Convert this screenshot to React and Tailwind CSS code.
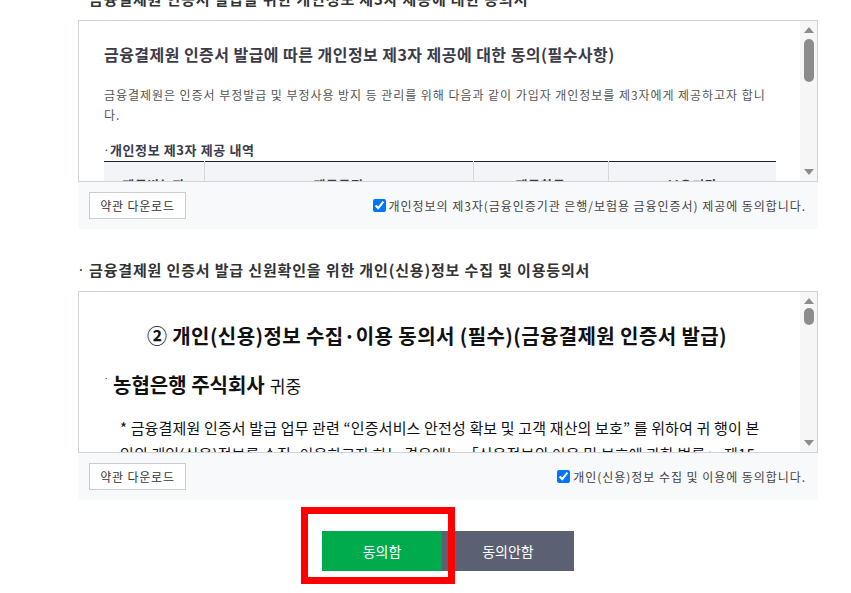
import React from 'react';

const FONT = { fontFamily: '"Noto Sans CJK KR", "Noto Sans", sans-serif' };

// fake scrollbar drawn in the right column of each box
const ScrollBar = ({ thumbTop, thumbHeight }) => (
  <div className="w-[17px] shrink-0 bg-[#f6f6f6] flex flex-col items-center py-[6px]">
    <div className="w-0 h-0 border-l-[5px] border-r-[5px] border-b-[6px] border-l-transparent border-r-transparent border-b-[#8c8c8c]" />
    <div
      className="w-[10px] rounded-full bg-[#8c8c8c]"
      style={{ marginTop: thumbTop, height: thumbHeight }}
    />
    <div className="flex-1" />
    <div className="w-0 h-0 border-l-[5px] border-r-[5px] border-t-[6px] border-l-transparent border-r-transparent border-t-[#8c8c8c]" />
  </div>
);

const BoxFooter = ({ label }) => (
  <div className="h-[47px] bg-[#f8f9fa] flex items-center justify-between pl-[11px] pr-[12px]">
    <button className="h-[27px] w-[97px] bg-white border border-[#cccccc] text-[12px] tracking-[0.8px] text-[#333]">
      약관 다운로드
    </button>
    <label className="flex items-center gap-[3px] text-[12px] tracking-[0.95px] text-[#444]">
      <input type="checkbox" defaultChecked className="w-[13px] h-[13px] accent-[#0075ff]" />
      {label}
    </label>
  </div>
);

const SectionTitle = ({ children }) => (
  <div className="leading-[20px] mb-[11px] text-[15px] tracking-[0.85px] font-bold text-[#333] flex items-center">
    <span className="w-[11px] text-[10px]">·</span>
    {children}
  </div>
);

const ThirdPartyContent = () => (
  <div className="pl-[25px] pr-[24px] pt-[23px] text-[#3b3b48]">
    <div className="text-[16px] font-bold leading-[20px] tracking-[0.45px]">
      금융결제원 인증서 발급에 따른 개인정보 제3자 제공에 대한 동의(필수사항)
    </div>
    <p className="mt-[21px] text-[12px] leading-[20px] tracking-[0.95px] text-[#555]">
      금융결제원은 인증서 부정발급 및 부정사용 방지 등 관리를 위해 다음과 같이 가입자 개인정보를 제3자에게 제공하고자 합니다.
    </p>
    <div className="mt-[16px] text-[13px] font-bold leading-[18px] tracking-[0.6px] flex items-center">
      <span className="w-[6px] text-[8px]">·</span>
      개인정보 제3자 제공 내역
    </div>
    <table className="mt-[2px] w-full border-t border-[#222] text-[13px] font-bold tracking-[0.6px] text-[#3b3b48]">
      <thead>
        <tr className="bg-[#f2f4f7]">
          <th className="w-[100px] h-[46px] border-r border-[#d5d9df]">제공받는자</th>
          <th className="w-[269px] border-r border-[#d5d9df]">제공목적</th>
          <th className="w-[135px] border-r border-[#d5d9df]">제공항목</th>
          <th>보유기간</th>
        </tr>
      </thead>
    </table>
  </div>
);

const CreditContent = () => (
  <div className="pl-[25px] pr-[30px] pt-[30px] text-[#111]">
    <div className="text-center text-[20px] tracking-[0.4px] font-bold leading-[28px]">
      ② 개인(신용)정보 수집·이용 동의서 (필수)(금융결제원 인증서 발급)
    </div>
    <div className="mt-[21px] leading-[28px] flex items-baseline">
      <span className="w-[9px] text-[8px] self-start leading-[14px]">·</span>
      <span className="text-[20px] font-bold">농협은행 주식회사</span>
      <span className="text-[17px] ml-[5px]">귀중</span>
    </div>
    <p className="mt-[15px] pl-[16px] text-[15px] tracking-[0.15px] leading-[26px]">
      * 금융결제원 인증서 발급 업무 관련 “인증서비스 안전성 확보 및 고객 재산의 보호” 를 위하여 귀 행이 본인의 개인(신용)정보를 수집·이용하고자 하는 경우에는 「신용정보의 이용 및 보호에 관한 법률」 제15조, 제32조 및 「개인정보 보호법」 제15조에 따라 본인의 동의를 얻어야 합니다.
    </p>
  </div>
);

const AgreementBox = ({ children, thumbTop, thumbHeight, label }) => (
  <div>
    <div className="h-[162px] border border-[#cfd4db] flex">
      <div className="flex-1 overflow-hidden">{children}</div>
      <ScrollBar thumbTop={thumbTop} thumbHeight={thumbHeight} />
    </div>
    <BoxFooter label={label} />
  </div>
);

export default function App() {
  return (
    <div className="w-full h-[593px] bg-white overflow-hidden" style={FONT}>
      <div className="ml-[78px] w-[740px] -mt-[11px]">
        <SectionTitle>금융결제원 인증서 발급을 위한 개인정보 제3자 제공에 대한 동의서</SectionTitle>
        <AgreementBox
          thumbTop={6}
          thumbHeight={43}
          label="개인정보의 제3자(금융인증기관 은행/보험용 금융인증서) 제공에 동의합니다."
        >
          <ThirdPartyContent />
        </AgreementBox>

        <div className="mt-[31px]">
          <SectionTitle>금융결제원 인증서 발급 신원확인을 위한 개인(신용)정보 수집 및 이용등의서</SectionTitle>
          <AgreementBox
            thumbTop={4}
            thumbHeight={17}
            label="개인(신용)정보 수집 및 이용에 동의합니다."
          >
            <CreditContent />
          </AgreementBox>
        </div>

        <div className="mt-[31px] flex justify-center">
          <div className="relative">
            <button className="h-[40px] w-[120px] bg-[#00ab4e] text-white text-[14px]">동의함</button>
            <div className="absolute -left-[21px] -top-[24px] -right-[13px] -bottom-[13px] border-[7px] border-[#ff0000] pointer-events-none" />
          </div>
          <button className="h-[40px] w-[132px] bg-[#5b6072] text-white text-[14px]">동의안함</button>
        </div>
      </div>
    </div>
  );
}
